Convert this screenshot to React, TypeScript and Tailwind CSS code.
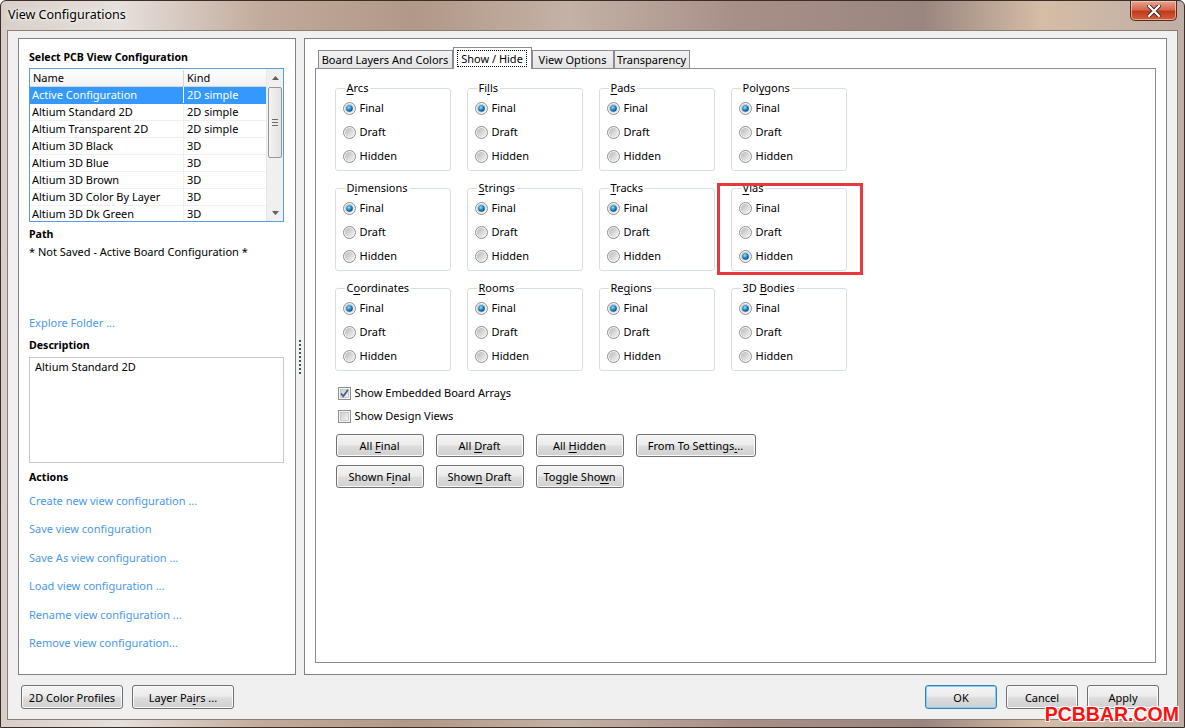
import React from "react";

type Group = { label: string; u: number; sel: number };

const groups: Group[] = [
  { label: "Arcs", u: 0, sel: 0 },
  { label: "Fills", u: 2, sel: 0 },
  { label: "Pads", u: 0, sel: 0 },
  { label: "Polygons", u: 3, sel: 0 },
  { label: "Dimensions", u: 1, sel: 0 },
  { label: "Strings", u: 0, sel: 0 },
  { label: "Tracks", u: 0, sel: 0 },
  { label: "Vias", u: 0, sel: 2 },
  { label: "Coordinates", u: 1, sel: 0 },
  { label: "Rooms", u: 0, sel: 0 },
  { label: "Regions", u: 2, sel: 0 },
  { label: "3D Bodies", u: 3, sel: 0 },
];

const rows = [
  ["Active Configuration", "2D simple"],
  ["Altium Standard 2D", "2D simple"],
  ["Altium Transparent 2D", "2D simple"],
  ["Altium 3D Black", "3D"],
  ["Altium 3D Blue", "3D"],
  ["Altium 3D Brown", "3D"],
  ["Altium 3D Color By Layer", "3D"],
  ["Altium 3D Dk Green", "3D"],
];

const actions = [
  "Create new view configuration ...",
  "Save view configuration",
  "Save As view configuration ...",
  "Load view configuration ...",
  "Rename view configuration ...",
  "Remove view configuration...",
];

function Mn({ text, u }: { text: string; u: number }) {
  if (u < 0) return <>{text}</>;
  return (
    <>
      {text.slice(0, u)}
      <span className="underline underline-offset-2">{text[u]}</span>
      {text.slice(u + 1)}
    </>
  );
}

function Radio({ checked }: { checked: boolean }) {
  return (
    <svg width="13" height="13" viewBox="0 0 13 13" className="shrink-0">
      <defs>
        <linearGradient id="rbg" x1="0" y1="0" x2="1" y2="1">
          <stop offset="0" stopColor="#b9b9b9" />
          <stop offset="1" stopColor="#f4f4f4" />
        </linearGradient>
        <radialGradient id="rdot" cx="0.4" cy="0.35" r="0.75">
          <stop offset="0" stopColor="#9be3ff" />
          <stop offset="0.45" stopColor="#1e8fd6" />
          <stop offset="1" stopColor="#0b3563" />
        </radialGradient>
      </defs>
      <circle cx="6.5" cy="6.5" r="6" fill="#f2f2f2" stroke="#8e8f8f" />
      <circle cx="6.5" cy="6.5" r="4.5" fill="url(#rbg)" />
      {checked && <circle cx="6.5" cy="6.5" r="3.3" fill="url(#rdot)" />}
    </svg>
  );
}

function Check({ checked }: { checked: boolean }) {
  return (
    <svg width="13" height="13" viewBox="0 0 13 13" className="shrink-0">
      <defs>
        <linearGradient id="cbg" x1="0" y1="0" x2="1" y2="1">
          <stop offset="0" stopColor="#cbcbcb" />
          <stop offset="1" stopColor="#f6f6f6" />
        </linearGradient>
      </defs>
      <rect x="0.5" y="0.5" width="12" height="12" fill="#f4f4f4" stroke="#8e8f8f" />
      <rect x="2.5" y="2.5" width="8" height="8" fill="url(#cbg)" stroke="#b5b5b5" strokeWidth="0.6" />
      {checked && (
        <path d="M3 6.5 L5.3 9.2 L10 2.8" fill="none" stroke="#4a5f97" strokeWidth="1.8" />
      )}
    </svg>
  );
}

function Btn({
  children,
  className = "",
  focus = false,
}: {
  children: React.ReactNode;
  className?: string;
  focus?: boolean;
}) {
  return (
    <button
      type="button"
      className={`flex items-center justify-center whitespace-nowrap rounded-[3px] border bg-[linear-gradient(#f4f4f4_0%,#ececec_45%,#dcdcdc_55%,#d0d0d0_100%)] text-[11px] leading-none text-black ${
        focus
          ? "border-[#3c7fb1] shadow-[inset_0_0_0_1px_#7fd0f5]"
          : "border-[#707070] shadow-[inset_0_0_0_1px_#fafafa]"
      } ${className}`}
    >
      <span>{children}</span>
    </button>
  );
}

function GroupBox({ g }: { g: Group }) {
  return (
    <fieldset className="w-[116px] rounded-[3px] border border-[#d5dfe5] px-[7px] pb-[2px]">
      <legend className="ml-[2px] px-[2px] leading-[16px]">
        <Mn text={g.label} u={g.u} />
      </legend>
      {["Final", "Draft", "Hidden"].map((opt, i) => (
        <div key={opt} className="flex h-[24px] items-center gap-[4px]">
          <Radio checked={g.sel === i} />
          <span>{opt}</span>
        </div>
      ))}
    </fieldset>
  );
}

function ListBox() {
  return (
    <div className="mt-[3px] flex h-[154px] w-[255px] overflow-hidden border border-[#569de5] bg-white">
      <div className="flex-1">
        <div className="flex h-[18px] items-center border-b border-[#d5d5d5] bg-[linear-gradient(#ffffff,#f1f2f4)]">
          <span className="w-[154px] border-r border-[#d5d5d5] pl-[3px] leading-[16px]">Name</span>
          <span className="pl-[3px] leading-[16px]">Kind</span>
        </div>
        {rows.map(([name, kind], i) => (
          <div
            key={name}
            className={`flex h-[17px] items-center border-b ${
              i === 0 ? "border-[#3399ff] bg-[#3399ff] text-white" : "border-[#f0f0f0]"
            }`}
          >
            <span className={`w-[154px] border-r pl-[2px] leading-[16px] ${i === 0 ? "border-[#ffffff]" : "border-[#f0f0f0]"}`}>
              {name}
            </span>
            <span className="pl-[3px] leading-[16px]">{kind}</span>
          </div>
        ))}
      </div>
      <div className="flex w-[17px] flex-col border-l border-[#e8e8e8] bg-[#f0f0f0]">
        <div className="flex h-[18px] items-center justify-center">
          <svg width="7" height="4" viewBox="0 0 7 4">
            <path d="M0 4 L3.5 0 L7 4 Z" fill="#606060" />
          </svg>
        </div>
        <div className="mx-[1px] flex h-[71px] flex-col items-center justify-center gap-[2px] rounded-[2px] border border-[#979797] bg-[linear-gradient(90deg,#f3f3f3,#e2e2e2)]">
          <div className="h-px w-[6px] bg-[#6d6d6d]" />
          <div className="h-px w-[6px] bg-[#6d6d6d]" />
          <div className="h-px w-[6px] bg-[#6d6d6d]" />
        </div>
        <div className="flex-1" />
        <div className="flex h-[17px] items-center justify-center">
          <svg width="7" height="4" viewBox="0 0 7 4">
            <path d="M0 0 L3.5 4 L7 0 Z" fill="#606060" />
          </svg>
        </div>
      </div>
    </div>
  );
}

function LeftPanel() {
  return (
    <div className="flex w-[278px] flex-col border border-[#828282] bg-white px-[10px] pt-[10px]">
      <div className="text-[10.6px] font-bold leading-[16px]">Select PCB View Configuration</div>
      <ListBox />
      <div className="mt-[4px] text-[10.6px] font-bold leading-[16px]">Path</div>
      <div className="mt-[2px] leading-[16px]">* Not Saved - Active Board Configuration *</div>
      <div className="mt-[55px] leading-[16px] text-[#4a98ec]">Explore Folder ...</div>
      <div className="mt-[6px] text-[10.6px] font-bold leading-[16px]">Description</div>
      <div className="mt-[4px] h-[106px] w-[255px] border border-[#c6c8cc] bg-white px-[5px] pt-[1px] leading-[16px]">
        Altium Standard 2D
      </div>
      <div className="mt-[6px] text-[10.6px] font-bold leading-[16px]">Actions</div>
      <div className="mt-[8px] flex flex-col gap-[12.4px]">
        {actions.map((a) => (
          <div key={a} className="leading-[16px] text-[#4a98ec]">
            {a}
          </div>
        ))}
      </div>
    </div>
  );
}

function Splitter() {
  return (
    <div className="flex w-[8px] flex-col items-center justify-center">
      <div className="flex flex-col gap-[2px]">
        {Array.from({ length: 9 }).map((_, i) => (
          <div key={i} className="h-[2px] w-[2px] bg-[#2f5f5a]" />
        ))}
      </div>
    </div>
  );
}

function Tabs() {
  const tabs = [
    { label: "Board Layers And Colors", w: "w-[135px]" },
    { label: "Show / Hide", w: "w-[79px]", sel: true },
    { label: "View Options", w: "w-[82px]" },
    { label: "Transparency", w: "w-[76px]" },
  ];
  return (
    <div className="flex h-[21px] items-end whitespace-nowrap pl-[3px]">
      {tabs.map((t) =>
        t.sel ? (
          <div
            key={t.label}
            className={`relative z-10 -mb-px flex h-[22px] ${t.w} items-start justify-center border border-b-0 border-[#898c95] bg-white pt-[2px]`}
          >
            <span className="border border-dotted border-black px-[3px] leading-[15px]">{t.label}</span>
          </div>
        ) : (
          <div
            key={t.label}
            className={`flex h-[18px] ${t.w} items-center justify-center border border-b-0 border-[#898c95] bg-[linear-gradient(#f2f2f2,#e3e3e3)] leading-[15px]`}
          >
            {t.label}
          </div>
        )
      )}
    </div>
  );
}

function RightPanel() {
  return (
    <div className="flex w-[865px] flex-col border border-[#828282] bg-white px-[10px] pb-[11px] pt-[8px]">
      <Tabs />
      <div className="relative flex-1 border border-[#898c95] bg-white pl-[19px] pt-[11px]">
        <div className="grid w-fit grid-cols-[116px_116px_116px_116px] gap-x-[16px] gap-y-[9px]">
          {groups.map((g) => (
            <GroupBox key={g.label} g={g} />
          ))}
        </div>
        <div className="absolute left-[401px] top-[114px] h-[92px] w-[146px] border-[3px] border-[#e8383d]" />
        <div className="mt-[14px] flex flex-col gap-[7px] pl-[3px]">
          <div className="flex h-[16px] items-center gap-[4px]">
            <Check checked />
            <span>
              Show Embedded Board Arra<span className="underline underline-offset-2">y</span>s
            </span>
          </div>
          <div className="flex h-[16px] items-center gap-[4px]">
            <Check checked={false} />
            <span>Show Design Views</span>
          </div>
        </div>
        <div className="mt-[10px] flex flex-col gap-[8px] pl-[1px]">
          <div className="flex gap-[12px]">
            <Btn className="h-[23px] w-[88px]">
              All <Mn text="Final" u={0} />
            </Btn>
            <Btn className="h-[23px] w-[88px]">
              All <Mn text="Draft" u={0} />
            </Btn>
            <Btn className="h-[23px] w-[88px]">
              All <Mn text="Hidden" u={0} />
            </Btn>
            <Btn className="h-[23px] w-[120px]">
              From To Settings<span className="underline underline-offset-2">.</span>..
            </Btn>
          </div>
          <div className="flex gap-[12px]">
            <Btn className="h-[23px] w-[88px]">
              Shown <Mn text="Final" u={1} />
            </Btn>
            <Btn className="h-[23px] w-[88px]">
              <Mn text="Shown" u={4} /> Draft
            </Btn>
            <Btn className="h-[23px] w-[88px]">
              Toggle <Mn text="Shown" u={3} />
            </Btn>
          </div>
        </div>
      </div>
    </div>
  );
}

function CloseButton() {
  return (
    <div className="mr-[7px] flex h-[20px] w-[47px] items-center justify-center rounded-b-[5px] border border-t-0 border-[#5b2a1e] bg-[linear-gradient(#e8a592_0%,#d46a50_45%,#c2391a_55%,#d0603e_100%)] shadow-[inset_0_0_0_1px_rgba(255,220,200,0.6)]">
      <svg width="14" height="12" viewBox="0 0 14 12">
        <path d="M2 1 L12 11 M12 1 L2 11" stroke="#3a2a2a" strokeWidth="4" strokeLinecap="square" />
        <path d="M2 1 L12 11 M12 1 L2 11" stroke="#ffffff" strokeWidth="2.2" strokeLinecap="square" />
      </svg>
    </div>
  );
}

export default function App() {
  return (
    <div className="relative h-[728px] w-[1185px] overflow-hidden rounded-t-[6px] border border-[#3a2e28] bg-[linear-gradient(90deg,#d9cfc8_0%,#e6e0dc_10%,#c2ab9c_22%,#b19888_35%,#c4b2a6_48%,#a89088_62%,#9a8680_78%,#d5bda6_88%,#bfaea6_100%)] font-['Noto_Sans',sans-serif] text-[11px] text-black">
      <div className="flex h-[29px] items-start justify-between">
        <span className="ml-[7px] mt-[6px] text-[12.5px] leading-[16px] [text-shadow:0_0_6px_#ffffff,0_0_3px_#ffffff]">
          View Configurations
        </span>
        <CloseButton />
      </div>
      <div className="ml-[6px] flex h-[690px] w-[1171px] flex-col border border-[#8a7d72] bg-[#f0f0f0]">
        <div className="box-content flex h-[637px] px-[10px] pt-[7px]">
          <LeftPanel />
          <Splitter />
          <RightPanel />
        </div>
        <div className="mt-[10px] flex items-center justify-between pl-[13px] pr-[18px]">
          <div className="flex gap-[9px]">
            <Btn className="h-[24px] w-[102px]">2D Color Profiles</Btn>
            <Btn className="h-[24px] w-[102px]">
              Layer Pa<span className="underline underline-offset-2">i</span>rs ...
            </Btn>
          </div>
          <div className="flex gap-[9px]">
            <Btn focus className="h-[24px] w-[72px]">
              OK
            </Btn>
            <Btn className="h-[24px] w-[72px]">Cancel</Btn>
            <Btn className="h-[24px] w-[72px]">Apply</Btn>
          </div>
        </div>
      </div>
      <div className="absolute bottom-[2px] right-[5px] font-['Liberation_Sans',sans-serif] text-[19.5px] font-bold leading-[22px] text-[#ff1010] [text-shadow:1px_1px_0_#ffffff,-1px_-1px_0_#ffffff,1px_-1px_0_#ffffff,-1px_1px_0_#ffffff]">
        PCBBAR.COM
      </div>
    </div>
  );
}
